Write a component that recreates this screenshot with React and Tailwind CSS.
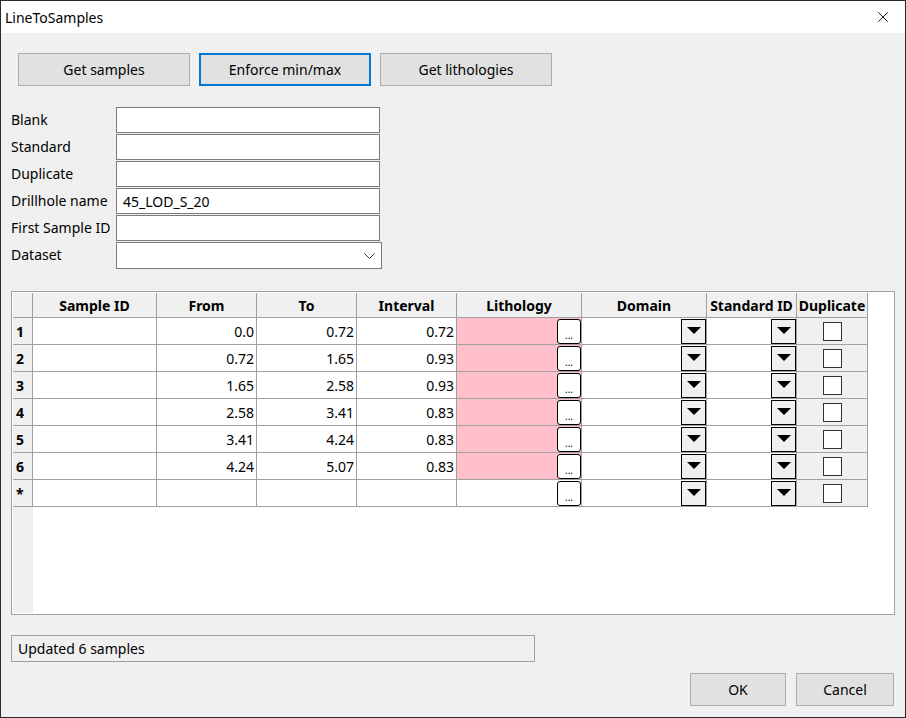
import { X } from "lucide-react";

const rows = [
  { n: "1", from: "0.0", to: "0.72", interval: "0.72", pink: true },
  { n: "2", from: "0.72", to: "1.65", interval: "0.93", pink: true },
  { n: "3", from: "1.65", to: "2.58", interval: "0.93", pink: true },
  { n: "4", from: "2.58", to: "3.41", interval: "0.83", pink: true },
  { n: "5", from: "3.41", to: "4.24", interval: "0.83", pink: true },
  { n: "6", from: "4.24", to: "5.07", interval: "0.83", pink: true },
  { n: "*", from: "", to: "", interval: "", pink: false },
];

const fields = [
  { label: "Blank", value: "" },
  { label: "Standard", value: "" },
  { label: "Duplicate", value: "" },
  { label: "Drillhole name", value: "45_LOD_S_20" },
  { label: "First Sample ID", value: "" },
];

const cols = "grid grid-cols-[20px_124px_100px_100px_100px_125px_125px_90px_71px]";
const cell = "border-r border-b border-[#a0a0a0] h-[27px]";

function DropButton() {
  return (
    <div className="w-[25px] h-[25px] border border-black bg-[#f0f0f0] flex items-center justify-center">
      <svg width="14" height="8" viewBox="0 0 14 8">
        <path d="M0 0 H14 L7 7 Z" fill="#000" />
      </svg>
    </div>
  );
}

function HeaderCell({ children }) {
  return (
    <div className="border-r border-b border-[#a0a0a0] h-[25px] bg-[#f0f0f0] flex items-center justify-center font-bold">
      {children}
    </div>
  );
}

function NumCell({ children }) {
  return <div className={`${cell} bg-white flex items-center justify-end pr-[2px]`}>{children}</div>;
}

export default function App() {
  return (
    <div className="w-[906px] h-[718px] bg-[#f0f0f0] border border-[#2b2b2b] flex flex-col text-[14px] text-black font-['Noto_Sans',sans-serif] overflow-hidden">
      {/* title bar */}
      <div className="h-[32px] bg-white flex items-center justify-between pl-[4px] pr-[13px] shrink-0">
        <span>LineToSamples</span>
        <X className="w-[18px] h-[18px]" strokeWidth={1.2} />
      </div>

      <div className="flex flex-col pl-[10px] pr-[10px]">
        {/* top buttons */}
        <div className="flex gap-[9px] mt-[20px] ml-[7px]">
          <button className="w-[172px] h-[33px] bg-[#e1e1e1] border border-[#adadad]">Get samples</button>
          <button className="w-[172px] h-[33px] bg-[#e1e1e1] border-2 border-[#0078d7]">Enforce min/max</button>
          <button className="w-[172px] h-[33px] bg-[#e1e1e1] border border-[#adadad]">Get lithologies</button>
        </div>

        {/* fields */}
        <div className="flex flex-col gap-[1px] mt-[21px]">
          {fields.map((f) => (
            <div key={f.label} className="flex items-center">
              <span className="w-[105px] -mt-[2px]">{f.label}</span>
              <div className="w-[264px] h-[26px] bg-white border border-[#7a7a7a] flex items-center px-[6px]">
                {f.value}
              </div>
            </div>
          ))}
          <div className="flex items-center">
            <span className="w-[105px] -mt-[2px]">Dataset</span>
            <div className="w-[266px] h-[27px] bg-white border border-[#7a7a7a] flex items-center justify-end pr-[6px]">
              <svg width="11" height="6" viewBox="0 0 11 6">
                <path d="M0.5 0.5 L5.5 5.5 L10.5 0.5" fill="none" stroke="#333" strokeWidth="1" />
              </svg>
            </div>
          </div>
        </div>

        {/* grid */}
        <div className="mt-[22px] w-[884px] h-[324px] border border-[#a0a0a0] bg-white p-[1px] flex">
          <div className="flex flex-col">
            <div className={cols}>
              <div className="border-r border-b border-[#a0a0a0] h-[25px] bg-[#f0f0f0]" />
              <HeaderCell>Sample ID</HeaderCell>
              <HeaderCell>From</HeaderCell>
              <HeaderCell>To</HeaderCell>
              <HeaderCell>Interval</HeaderCell>
              <HeaderCell>Lithology</HeaderCell>
              <HeaderCell>Domain</HeaderCell>
              <HeaderCell>Standard ID</HeaderCell>
              <HeaderCell>Duplicate</HeaderCell>
            </div>
            {rows.map((r) => (
              <div key={r.n} className={cols}>
                <div className={`${cell} bg-[#f0f0f0] flex items-center pl-[3px] font-bold`}>{r.n}</div>
                <div className={`${cell} bg-white`} />
                <NumCell>{r.from}</NumCell>
                <NumCell>{r.to}</NumCell>
                <NumCell>{r.interval}</NumCell>
                <div className={`${cell} flex items-center justify-end ${r.pink ? "bg-[#ffc0cb]" : "bg-white"}`}>
                  <div className="w-[24px] h-[25px] bg-white border border-black rounded-[3px] flex items-end justify-center pb-[3px] text-[10px] leading-none">
                    ...
                  </div>
                </div>
                <div className={`${cell} bg-white flex items-center justify-end`}>
                  <DropButton />
                </div>
                <div className={`${cell} bg-white flex items-center justify-end`}>
                  <DropButton />
                </div>
                <div className={`${cell} bg-[#f0f0f0] flex items-center justify-center`}>
                  <div className="w-[19px] h-[19px] bg-white border border-[#333]" />
                </div>
              </div>
            ))}
            <div className="flex-1 w-[20px] bg-[#f0f0f0]" />
          </div>
        </div>

        {/* status */}
        <div className="mt-[20px] w-[524px] h-[27px] border border-[#a0a0a0] flex items-center pl-[6px]">
          Updated 6 samples
        </div>

        {/* ok / cancel */}
        <div className="flex justify-end gap-[10px] mt-[11px] mr-[1px]">
          <button className="w-[96px] h-[33px] bg-[#e1e1e1] border border-[#adadad]">OK</button>
          <button className="w-[98px] h-[33px] bg-[#e1e1e1] border border-[#adadad]">Cancel</button>
        </div>
      </div>
    </div>
  );
}
